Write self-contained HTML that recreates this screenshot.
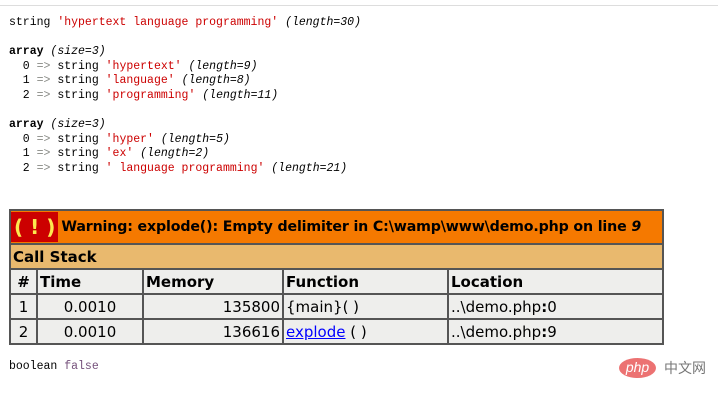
<!DOCTYPE html>
<html><head><meta charset="utf-8"><style>
body{margin:0;width:718px;height:401px;background:#fff;position:relative;overflow:hidden;font-family:"Liberation Sans",sans-serif}
.top{position:absolute;left:0;top:5px;width:718px;height:1px;background:#ddd}
pre{position:absolute;left:9px;margin:0;font-family:"Liberation Mono","DejaVu Sans Mono",monospace;font-size:11.5px;line-height:14.6px;color:#000}
.s{color:#cc0000}.i{font-style:italic}.b{font-weight:bold}.g{color:#888a85}.f{color:#75507b}
table{position:absolute;left:9px;top:209px;width:653px;table-layout:fixed;border-collapse:collapse;font-family:"DejaVu Sans","Liberation Sans",sans-serif;font-size:15px}
td,th{border:2px solid #555;padding:0 2px;height:21px;white-space:nowrap;overflow:hidden}
th{text-align:left;background:#eeeeec}
td{background:#eeeeec;font-size:15px}
.w{background:#f57900;height:30px;padding:0;font-weight:bold;font-size:14.2px;letter-spacing:-0.15px}
.ex{display:inline-block;background:#cc0000;color:#fce94f;padding:0 3px;font-size:20px;line-height:30px;margin-right:3px;vertical-align:middle;letter-spacing:0}
.cs{background:#e9b96e;font-weight:bold}
</style></head><body>
<div class="top"></div>
<pre style="top:16px">string <span class="s">'hypertext language programming'</span> <span class="i">(length=30)</span>

<span class="b">array</span> <span class="i">(size=3)</span>
  0 <span class="g">=&gt;</span> string <span class="s">'hypertext'</span> <span class="i">(length=9)</span>
  1 <span class="g">=&gt;</span> string <span class="s">'language'</span> <span class="i">(length=8)</span>
  2 <span class="g">=&gt;</span> string <span class="s">'programming'</span> <span class="i">(length=11)</span>

<span class="b">array</span> <span class="i">(size=3)</span>
  0 <span class="g">=&gt;</span> string <span class="s">'hyper'</span> <span class="i">(length=5)</span>
  1 <span class="g">=&gt;</span> string <span class="s">'ex'</span> <span class="i">(length=2)</span>
  2 <span class="g">=&gt;</span> string <span class="s">' language programming'</span> <span class="i">(length=21)</span></pre>
<table>
<colgroup><col style="width:27px"><col style="width:106px"><col style="width:140px"><col style="width:165px"><col style="width:215px"></colgroup>
<tr><th colspan="5" class="w" style="height:32px"><span class="ex">( ! )</span>Warning: explode(): Empty delimiter in C:\wamp\www\demo.php on line <i>9</i></th></tr>
<tr><th colspan="5" class="cs" style="height:23px">Call Stack</th></tr>
<tr><th style="text-align:center;height:23px">#</th><th>Time</th><th>Memory</th><th>Function</th><th>Location</th></tr>
<tr><td align="center" style="height:23px">1</td><td align="center">0.0010</td><td align="right">135800</td><td>{main}( )</td><td>..\demo.php<b>:</b>0</td></tr>
<tr><td align="center" style="height:23px">2</td><td align="center">0.0010</td><td align="right">136616</td><td><a href="#" style="color:#00f">explode</a> ( )</td><td>..\demo.php<b>:</b>9</td></tr>
</table>
<pre style="top:360px">boolean <span class="f">false</span></pre>
<div style="position:absolute;left:619px;top:358px;width:37px;height:20px;border-radius:50%;background:#ec7272;color:#fff;font-size:14px;line-height:18px;text-align:center;font-style:italic">php</div>
<div style="position:absolute;left:664px;top:358px;font-family:'Noto Sans CJK SC',sans-serif;font-size:14px;line-height:20px;color:#777">中文网</div>
</body></html>
